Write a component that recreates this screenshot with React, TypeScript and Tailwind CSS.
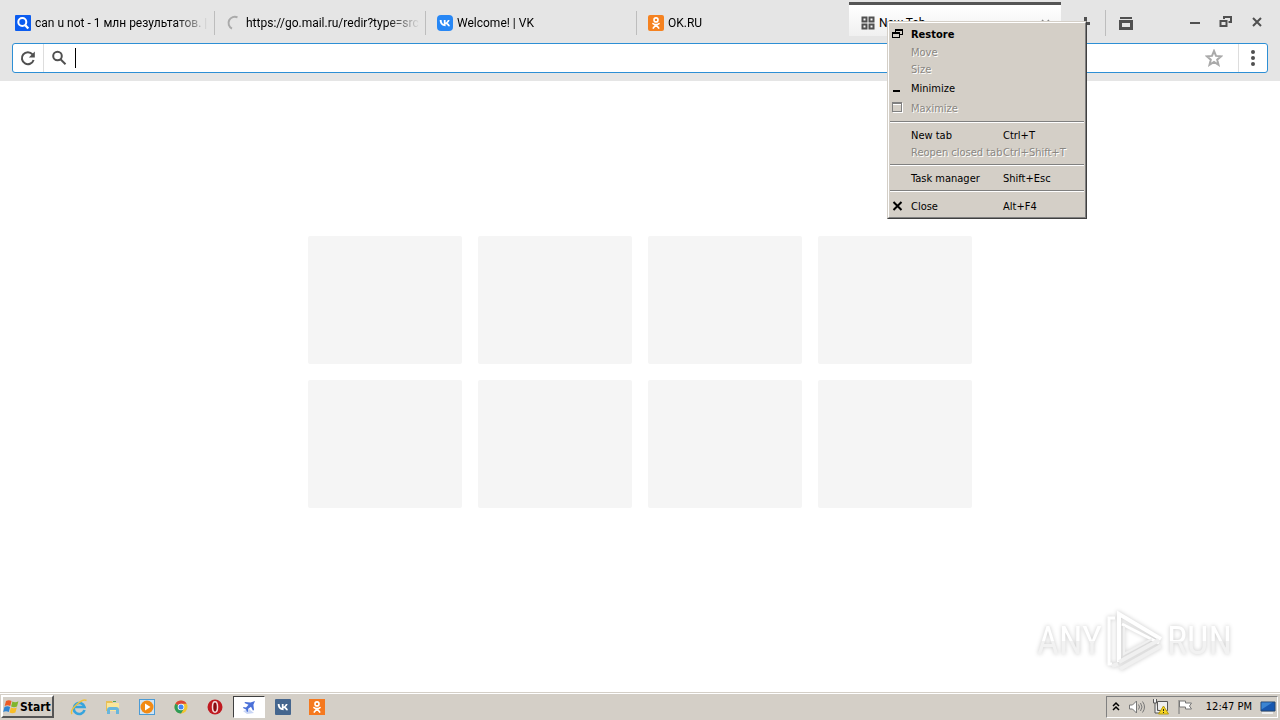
import React, { useState } from 'react';

interface Tab {
  title: string;
  icon: React.ReactNode;
}

interface MenuRow {
  label: string;
  shortcut?: string;
  icon?: React.ReactNode;
  disabled?: boolean;
  bold?: boolean;
  tall?: boolean;
}

const SearchFavicon = () => (
  <svg width="16" height="16" viewBox="0 0 16 16" fill="none">
    <rect width="16" height="16" rx="1" fill="#0b5cf0" />
    <circle cx="7.3" cy="7" r="4" stroke="#fff" strokeWidth="2" />
    <path d="M10.3 10.3l3 3.2" stroke="#fff" strokeWidth="2.4" />
  </svg>
);

const SpinnerIcon = () => (
  <svg width="16" height="16" viewBox="0 0 16 16" fill="none">
    <path d="M11.5 2.4A6 6 0 1 0 6 13.6" stroke="#aaa" strokeWidth="2" />
  </svg>
);

const VkIcon = ({ color, radius = 4 }: { color: string; radius?: number }) => (
  <svg width="16" height="16" viewBox="0 0 16 16">
    <rect width="16" height="16" rx={radius} fill={color} />
    <path
      d="M8.6 11.2C5 11.2 2.8 8.9 2.7 5h1.9c.1 2.7 1.3 3.9 2.2 4.1V5h1.8v2.4c.9-.1 1.9-1.2 2.2-2.4h1.8c-.3 1.5-1.4 2.6-2.1 3.1.8.4 2 1.3 2.5 3.1H11c-.4-1.2-1.4-2.1-2.4-2.2z"
      fill="#fff"
    />
  </svg>
);

const OkIcon = ({ color, radius = 2 }: { color: string; radius?: number }) => (
  <svg width="16" height="16" viewBox="0 0 16 16" fill="none">
    <rect width="16" height="16" rx={radius} fill={color} />
    <circle cx="8" cy="4.9" r="2" stroke="#fff" strokeWidth="1.6" />
    <path d="M5 8.6c1.9 1.3 4.1 1.3 6 0M8 9.8l-2.7 3.2M8 9.8l2.7 3.2" stroke="#fff" strokeWidth="1.7" strokeLinecap="round" />
  </svg>
);

const GridIcon = () => (
  <svg width="14" height="14" viewBox="0 0 14 14" fill="none" stroke="#505050" strokeWidth="2">
    <path d="M1.5 1.5h4v4h-4zM8.5 1.5h4v4h-4zM1.5 8.5h4v4h-4zM8.5 8.5h4v4h-4z" />
  </svg>
);

const tabs: Tab[] = [
  { title: 'can u not - 1 млн результатов. |', icon: <SearchFavicon /> },
  { title: 'https://go.mail.ru/redir?type=src', icon: <SpinnerIcon /> },
  { title: 'Welcome! | VK', icon: <VkIcon color="#2787f5" /> },
  { title: 'OK.RU', icon: <OkIcon color="#f58220" /> },
];

const RestoreGlyph = () => (
  <svg width="12" height="12" viewBox="0 0 12 12" fill="none" stroke="#000" shapeRendering="crispEdges">
    <path d="M3.5 5V1.5h7v5H8M3 2.5h8" />
    <path d="M0.5 4.5h7v5h-7zM0 5.5h8" />
  </svg>
);

const MinimizeGlyph = () => (
  <svg width="12" height="12" viewBox="0 0 12 12">
    <rect x="1" y="8" width="7" height="2" fill="#000" />
  </svg>
);

const MaximizeGlyph = () => (
  <svg width="12" height="12" viewBox="0 0 12 12" fill="none" shapeRendering="crispEdges">
    <path d="M1 2.5h9M10.5 1v10M1 10.5h10" stroke="#fff" />
    <path d="M0.5 0.5h9v9h-9zM0 1.5h10" stroke="#808080" />
  </svg>
);

const CloseGlyph = () => (
  <svg width="12" height="12" viewBox="0 0 12 12" stroke="#000" strokeWidth="2">
    <path d="M1.5 2l8 8M9.5 2l-8 8" />
  </svg>
);

const menuGroups: MenuRow[][] = [
  [
    { label: 'Restore', icon: <RestoreGlyph />, bold: true, tall: true },
    { label: 'Move', disabled: true },
    { label: 'Size', disabled: true },
    { label: 'Minimize', icon: <MinimizeGlyph />, tall: true },
    { label: 'Maximize', icon: <MaximizeGlyph />, disabled: true, tall: true },
  ],
  [
    { label: 'New tab', shortcut: 'Ctrl+T' },
    { label: 'Reopen closed tab', shortcut: 'Ctrl+Shift+T', disabled: true },
  ],
  [{ label: 'Task manager', shortcut: 'Shift+Esc' }],
  [{ label: 'Close', shortcut: 'Alt+F4', icon: <CloseGlyph />, tall: true }],
];

const WindowMenu = () => (
  <div
    role="menu"
    className="absolute left-[887px] top-[21px] z-20 w-[200px] border border-t-[#d4cfc7] border-l-[#d4cfc7] border-r-[#404040] border-b-[#404040] bg-[#d4cfc7] font-['DejaVu_Sans_Condensed','Tahoma','DejaVu_Sans',sans-serif] text-[11px] leading-4 text-black"
  >
    <div className="border border-t-white border-l-white border-r-[#808080] border-b-[#808080] p-px">
      {menuGroups.map((group, i) => (
        <div key={i}>
          {i > 0 && <div className="mt-[3px] mb-1 h-[2px] border-t border-[#808080] bg-white" />}
          {group.map(row => (
            <button
              key={row.label}
              role="menuitem"
              disabled={row.disabled}
              className={`grid w-full grid-cols-[21px_92px_1fr] items-center whitespace-nowrap text-left ${
                row.tall ? 'h-5' : 'h-[17px]'
              } ${row.disabled ? 'text-[#8a8782] [text-shadow:1px_1px_0_#fff]' : ''} ${row.bold ? 'font-bold' : ''}`}
            >
              <span className="pl-[2px]">{row.icon}</span>
              <span className={row.tall ? 'pt-[2px]' : ''}>{row.label}</span>
              <span className={row.tall ? 'pt-[2px]' : ''}>{row.shortcut}</span>
            </button>
          ))}
        </div>
      ))}
    </div>
  </div>
);

const TabStrip = () => (
  <div className="flex h-[36px] items-end pl-1">
    <div role="tablist" className="flex h-[34px] min-w-0">
      {tabs.map((tab, i) => (
        <button
          key={tab.title}
          role="tab"
          className="flex w-[211px] min-w-0 items-center pt-2 pl-[11px] text-left"
        >
          <span className="shrink-0">{tab.icon}</span>
          <span className="ml-1 min-w-0 flex-1 overflow-hidden whitespace-nowrap [mask-image:linear-gradient(to_right,#000_140px,transparent_174px)]">
            {tab.title}
          </span>
          <span className={`ml-1 h-6 w-px ${i < 3 ? 'bg-[#bdbdbd]' : ''}`} />
        </button>
      ))}
      <div
        role="tab"
        aria-selected="true"
        className="ml-px flex w-[212px] items-center border-t-[3px] border-[#555] bg-linear-to-b from-white to-[#f0f0f0] pt-[5px] pr-[9px] pl-3"
      >
        <GridIcon />
        <span className="ml-1 flex-1">New Tab</span>
        <button aria-label="Close tab" className="w-3">
          <svg width="12" height="12" viewBox="0 0 12 12" stroke="#888" strokeWidth="1.5">
            <path d="M2 3l7 7M9 3l-7 7" />
          </svg>
        </button>
      </div>
    </div>
    <button aria-label="New tab" className="flex h-[26px] w-[45px] items-center justify-center border-r border-[#bdbdbd] pl-1">
      <svg width="14" height="14" viewBox="0 0 14 14" stroke="#505050" strokeWidth="3">
        <path d="M7.5 1v12M1 7.5h11" />
      </svg>
    </button>
    <button aria-label="Closed tabs" className="flex h-[26px] w-10 items-center justify-center">
      <svg width="14" height="14" viewBox="0 0 14 14" fill="none" stroke="#505050">
        <path d="M1 2h12" strokeWidth="2" />
        <path d="M1.5 5.5h11v7h-11z" strokeWidth="3" />
      </svg>
    </button>
    <div className="ml-auto flex h-[28px] items-center pr-2">
      <button aria-label="Minimize window" className="flex w-[31px] justify-center">
        <svg width="12" height="12" viewBox="0 0 12 12">
          <rect x="1" y="6" width="10" height="2" fill="#505050" />
        </svg>
      </button>
      <button aria-label="Restore window" className="flex w-[31px] justify-center">
        <svg width="13" height="12" viewBox="0 0 13 12" fill="none" stroke="#505050" strokeWidth="2">
          <path d="M5 3V1h7v5H9.5" />
          <path d="M1.5 5h6v5h-6z" />
        </svg>
      </button>
      <button aria-label="Close window" className="flex w-[31px] justify-center">
        <svg width="12" height="12" viewBox="0 0 12 12" stroke="#505050" strokeWidth="2">
          <path d="M2 2l8 8M10 2l-8 8" />
        </svg>
      </button>
    </div>
  </div>
);

const AddressBar = () => {
  const [query, setQuery] = useState('');

  return (
    <div className="mx-3 mt-[7px] flex h-[30px] items-center rounded-[3px] border border-[#2d8fd5] bg-white">
      <button aria-label="Reload" className="flex h-full w-[31px] items-center justify-center border-r border-[#ddd]">
        <svg width="16" height="16" viewBox="0 0 16 16" fill="none" stroke="#505050" strokeWidth="2">
          <path d="M12.5 4.3A6 6 0 1 0 13.6 10" />
          <path d="M14.8 1.5v6H8.8z" fill="#505050" stroke="none" />
        </svg>
      </button>
      <label htmlFor="address" aria-label="Search or address" className="flex w-[31px] justify-center pr-[2px]">
        <svg width="16" height="16" viewBox="0 0 16 16" fill="none" stroke="#505050" strokeWidth="2">
          <circle cx="6.5" cy="6" r="4.3" />
          <path d="M9.5 9.3l5 5" />
        </svg>
      </label>
      <span className="h-5 w-px bg-black" />
      <input
        id="address"
        type="text"
        value={query}
        onChange={e => setQuery(e.target.value)}
        className="min-w-0 flex-1 bg-transparent outline-none"
      />
      <button aria-label="Add bookmark" className="flex w-12 justify-center">
        <svg width="18" height="18" viewBox="0 0 18 18" fill="none" stroke="#aaa" strokeWidth="2">
          <path d="M9 2l2 4.900 5.200.4-4 3.400 1.300 5.100L9 13l-4.500 2.800 1.300-5.100-4-3.400L7 6.900z" />
        </svg>
      </button>
      <button aria-label="Menu" className="flex h-full w-[29px] items-center justify-center border-l border-[#ddd]">
        <svg width="4" height="16" viewBox="0 0 4 16" fill="#505050">
          <circle cx="2" cy="2" r="2" />
          <circle cx="2" cy="8" r="2" />
          <circle cx="2" cy="14" r="2" />
        </svg>
      </button>
    </div>
  );
};

const Watermark = () => (
  <div className="absolute right-12 bottom-[18px] flex items-center font-['Roboto_Condensed','Liberation_Sans_Narrow','Roboto',sans-serif] text-[38px] leading-[64px] [filter:drop-shadow(0_0_2px_#c8c8c8)]">
    <span className="bg-linear-to-b from-white from-50% to-[#f2f2f2] to-50% bg-clip-text text-transparent">ANY</span>
    <svg width="65" height="66" viewBox="2 0 65 66" fill="none" stroke="#fff" strokeWidth="4">
      <path d="M15 10H9v46h3" strokeWidth="3" />
      <path d="M19 54V6l42 25" />
      <path d="M59 35L22 16" strokeWidth="3" />
      <path d="M19 54l40-22M12 58l6-2M20 61l41-23" stroke="#f0f0f0" />
      <path d="M24 18v28l28-15" stroke="#f0f0f0" strokeWidth="2" />
    </svg>
    <span className="bg-linear-to-b from-white from-50% to-[#f2f2f2] to-50% bg-clip-text text-transparent">RUN</span>
  </div>
);

const StartFlag = () => (
  <svg width="17" height="16" viewBox="0 0 17 16" className="shrink-0">
    <path d="M3 2c2-1 4-.8 5.5 0L7.3 7C5.5 6 3.5 6 1.7 7z" fill="#ed5a24" />
    <path d="M9.4 2.5c2 1 4 .8 6-.2L14 7.4c-2 1-4 1-5.9 0z" fill="#80b52c" />
    <path d="M1.5 8c2-1 4-.9 5.6 0l-1.3 5C4 12 2 12 .2 13z" fill="#2f84d2" />
    <path d="M7.9 8.5c2 1 4 1 5.9 0l-1.4 5c-2 1-4 1-5.8 0z" fill="#f8bd27" />
  </svg>
);

const launchers = [
  {
    name: 'Internet Explorer',
    icon: (
      <svg width="18" height="18" viewBox="0 0 18 18" fill="none">
        <path d="M14.5 12A5.5 5.5 0 1 1 14.5 9H5" stroke="#36a4dd" strokeWidth="2.6" />
        <path d="M2 16C-1 12 12 0 16.5 2.5" stroke="#efc13d" strokeWidth="1.5" />
      </svg>
    ),
  },
  {
    name: 'Explorer',
    icon: (
      <svg width="18" height="18" viewBox="0 0 18 18">
        <path d="M2 3h6l1 2h6v8H2z" fill="#e8bf55" />
        <path d="M3 5h12v8H3z" fill="#fae69a" />
        <path d="M3 16v-4q0-3 3-3h6q3 0 3 3v4h-3v-4H6v4z" fill="#68b6dc" />
        <path d="M9 3h3v1H9z" fill="#52a552" />
      </svg>
    ),
  },
  {
    name: 'Media Player',
    icon: (
      <svg width="18" height="18" viewBox="0 0 18 18">
        <rect x="1" y="1" width="16" height="16" fill="#4b9bd5" />
        <rect x="2" y="2" width="14" height="14" fill="#cfe4f5" />
        <circle cx="9" cy="9" r="6.5" fill="#f28a14" />
        <path d="M7 5.5v7L12.5 9z" fill="#fff" />
      </svg>
    ),
  },
  {
    name: 'Chrome',
    icon: (
      <svg width="18" height="18" viewBox="0 0 18 18">
        <circle cx="9" cy="9" r="6.5" fill="#f2c431" />
        <path d="M9 9L3.4 5.7A6.5 6.5 0 0 1 14.6 5.7H9z" fill="#dc4437" />
        <path d="M9 9L3.4 5.7A6.5 6.5 0 0 0 9 15.5l3-5z" fill="#2e9b58" />
        <circle cx="9" cy="9" r="3.3" fill="#fff" />
        <circle cx="9" cy="9" r="2.5" fill="#4285f4" />
      </svg>
    ),
  },
  {
    name: 'Opera',
    icon: (
      <svg width="18" height="18" viewBox="0 0 18 18">
        <circle cx="9" cy="9" r="7.5" fill="#c01a20" />
        <ellipse cx="9" cy="9" rx="2.5" ry="5.2" fill="#8a0a10" stroke="#f4dcdc" strokeWidth="1.5" />
      </svg>
    ),
  },
  {
    name: 'Browser',
    active: true,
    icon: (
      <svg width="18" height="18" viewBox="0 0 18 18">
        <path d="M3 13l6-2 5 4-7 1z" fill="#c9d6f5" />
        <path d="M15 3l-4.5 1.5L5 4l-.5 1 4 1.7L6 9.5 3.5 9l-.5 1 3 1.5L7 14l1-.5V11l3-2.3 2 4 1-1-.6-5z" fill="#4a70d8" />
      </svg>
    ),
  },
  { name: 'VK', icon: <VkIcon color="#45668e" radius={1} /> },
  { name: 'OK', icon: <OkIcon color="#f5791f" radius={0} /> },
];

const Taskbar = () => (
  <footer className="flex h-[28px] items-center border-t border-[#d4cfc7] bg-[#d4cfc7] pl-px font-['DejaVu_Sans_Condensed','Tahoma','DejaVu_Sans',sans-serif] text-[11px] text-black shadow-[inset_0_1px_0_#fff]">
    <button className="flex h-[23px] w-[53px] items-center border-2 border-t-white border-l-white border-r-[#555] border-b-[#555] text-[12px] font-bold">
      <StartFlag />
      Start
    </button>
    <nav aria-label="Quick launch" className="ml-2 flex">
      {launchers.map(item => (
        <button
          key={item.name}
          aria-label={item.name}
          className={`mx-px flex h-[22px] w-8 items-center justify-center border ${
            item.active ? 'border-t-[#404040] border-l-[#404040] border-r-white border-b-white bg-white' : 'border-transparent'
          }`}
        >
          {item.icon}
        </button>
      ))}
    </nav>
    <div className="mr-[2px] ml-auto flex h-[22px] items-center border border-t-[#808080] border-l-[#808080] border-r-white border-b-white pl-1">
      <button aria-label="Show hidden icons" className="w-[17px]">
        <svg width="10" height="12" viewBox="0 0 10 12" fill="none" stroke="#000" strokeWidth="1.5">
          <path d="M2 5l3-3 3 3M2 9l3-3 3 3" />
        </svg>
      </button>
      <button aria-label="Volume" className="w-6">
        <svg width="18" height="16" viewBox="0 0 18 16" fill="none" stroke="#777">
          <path d="M1.5 6h3l4-4v12l-4-4h-3z" fill="#fff" />
          <path d="M10.5 5.5q2 2.5 0 5M12.5 4q3 4 0 8M14.5 2.5q4 5.5 0 11" />
        </svg>
      </button>
      <button aria-label="Network" className="w-6">
        <svg width="18" height="18" viewBox="0 0 18 18" fill="none">
          <path d="M5.5 3.5h10v9h-10zM1.500 1v4h3V1M3 5v10h6" stroke="#555" fill="#eee" />
          <path d="M11.5 8l5 8H6.5z" fill="#f7d521" stroke="#b59a10" />
          <path d="M11.5 11v2M11.5 14v1" stroke="#222" />
        </svg>
      </button>
      <button aria-label="Action center" className="w-[30px]">
        <svg width="18" height="18" viewBox="0 0 18 18" fill="#fff" stroke="#777">
          <path d="M3 2v14M3.5 3h6v2h6l-2 3 2 3h-6V9h-6z" />
        </svg>
      </button>
      <span className="pt-[2px]">12:47 PM</span>
      <button aria-label="Show desktop" className="ml-[7px]">
        <svg width="18" height="16" viewBox="0 0 18 16">
          <path d="M2 3h14v9H2z" fill="#1757b0" stroke="#26476f" />
          <path d="M2.5 3.5h11l-11 7z" fill="#3b84d2" />
          <path d="M3 14h11" stroke="#eee" strokeWidth="2" />
        </svg>
      </button>
    </div>
  </footer>
);

export default function App() {
  return (
    <div className="relative flex min-h-screen flex-col bg-white">
      <header className="h-[81px] bg-[#e5e5e5] font-['Roboto','Noto_Sans',sans-serif] text-[12px] leading-4 text-black">
        <TabStrip />
        <AddressBar />
      </header>
      <WindowMenu />
      <main className="relative flex-1 pt-[155px]">
        <div className="mx-auto grid w-fit grid-cols-4 gap-4">
          {Array.from({ length: 8 }, (_, i) => (
            <a key={i} href="#" aria-label={`Bookmark ${i + 1}`} className="h-32 w-[154px] rounded-[2px] bg-[#f5f5f5]" />
          ))}
        </div>
        <Watermark />
      </main>
      <Taskbar />
    </div>
  );
}
